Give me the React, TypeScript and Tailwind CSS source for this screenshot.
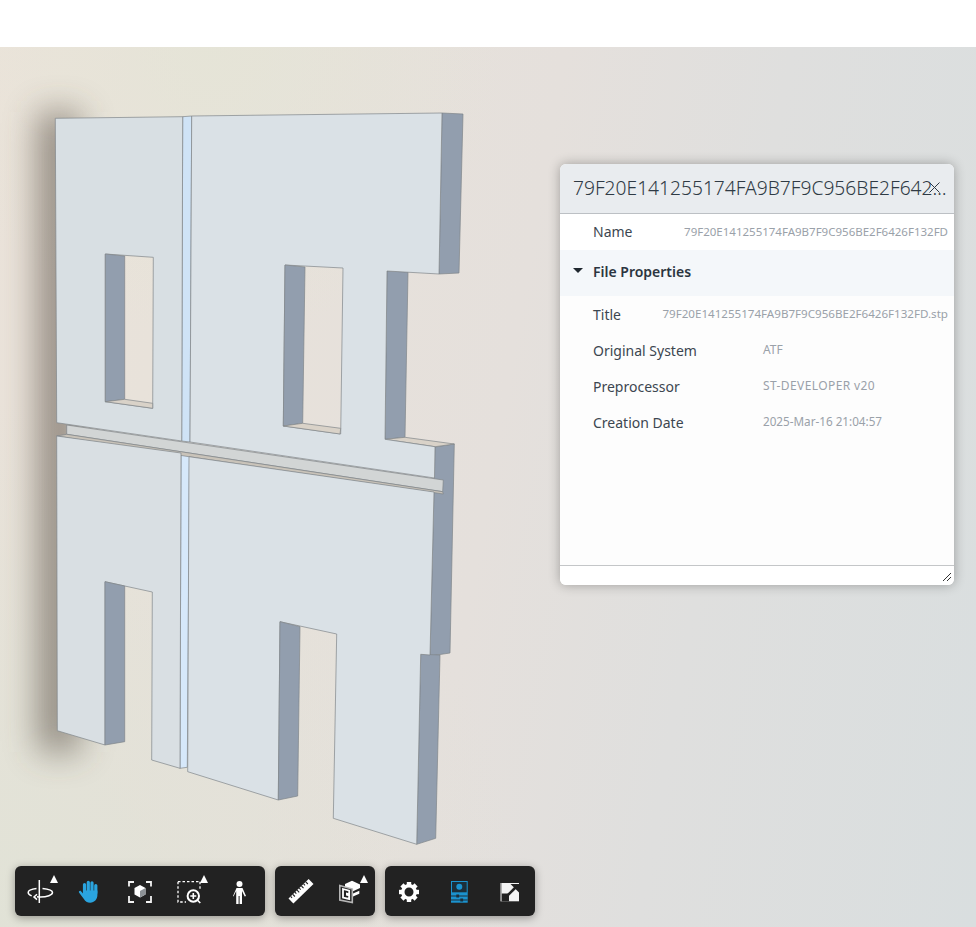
const rows = [
  { label: "Title", value: "79F20E141255174FA9B7F9C956BE2F6426F132FD.stp", size: "text-[11.6px]" },
  { label: "Original System", value: "ATF", size: "text-[12px]" },
  { label: "Preprocessor", value: "ST-DEVELOPER v20", size: "text-[12px] tracking-[0.4px]" },
  { label: "Creation Date", value: "2025-Mar-16 21:04:57", size: "text-[11.7px]" },
];

function Flyout() {
  return <span className="absolute right-[7px] top-[9px] h-0 w-0 border-x-[4px] border-b-[8px] border-x-transparent border-b-white" />;
}

function ToolButton({ children, flyout }: { children: React.ReactNode; flyout?: boolean }) {
  return (
    <div className="relative flex h-[50px] w-[50px] items-center justify-center">
      {children}
      {flyout && <Flyout />}
    </div>
  );
}

function OrbitIcon() {
  return (
    <svg width="28" height="28" viewBox="0 0 28 28" fill="none" stroke="white" strokeWidth="1.500">
      <path d="M13.300 3v23" />
      <path d="M10.500 11.500C5.500 12 2.200 13.500 2.200 15.500c0 1.300 1.300 2.500 3.500 3.400" />
      <path d="M16.500 11.500c5.500.5 10 2 10 4 0 2.500-5.500 4.500-12 4.500-1.200 0-2.500-.1-3.500-.2" />
      <path d="M11 17.200l-3 2.700 3 2.700" />
    </svg>
  );
}

function HandIcon() {
  return (
    <svg width="28" height="28" viewBox="0 0 28 28" fill="none" stroke="#2aa4df" strokeLinecap="round">
      <path d="M8.500 16V7.500M12.300 15V5.300M16 15V5.800M19.800 16V8.500" strokeWidth="3.200" />
      <path
        d="M7 13.500h14.400V18c0 4.200-3 7.700-7.200 7.700-3 0-5-1.500-6.500-4L3 15.500c-.6-1.200 1-2.300 2-1.300l2 2.300z"
        fill="#2aa4df"
        stroke="none"
      />
    </svg>
  );
}

function FitIcon() {
  return (
    <svg width="28" height="28" viewBox="0 0 28 28" fill="none">
      <path d="M8 5H3V9.500M20 5h5V9.500M3 19v6H8M25 19v6H20" stroke="#f2f2f2" strokeWidth="1.800" />
      <path d="M14 8l5.500 3v6.500L14 20.500l-5.500-3V11z" fill="white" />
      <path d="M14 14v6.500l5.500-3V11z" fill="#8d9296" />
    </svg>
  );
}

function ZoomWindowIcon() {
  return (
    <svg width="28" height="28" viewBox="0 0 28 28" fill="none" stroke="white">
      <path d="M2 4.700h21M2 4.700v20.300h8" strokeWidth="1.300" strokeDasharray="2.500 2" />
      <path d="M24 4.700v7" strokeWidth="1.300" strokeDasharray="2.500 2" />
      <circle cx="17.300" cy="19" r="5.700" strokeWidth="2" />
      <path d="M17.300 16v6M14.300 19h6M21.500 23.200l2.800 2.800" strokeWidth="1.600" />
    </svg>
  );
}

function PersonIcon() {
  return (
    <svg width="28" height="28" viewBox="0 0 28 28" fill="white">
      <circle cx="13.500" cy="7" r="3" />
      <path d="M10.500 11h6l3.500 8-1.300.6-2.700-5.500V27h-2.400v-8h-1v8h-2.400V14.100l-2.700 5.500L7 19z" />
    </svg>
  );
}

function RulerIcon() {
  return (
    <svg width="28" height="28" viewBox="0 0 28 28">
      <g transform="rotate(-44 15 14.300)">
        <rect x="1" y="10.800" width="28" height="7" fill="white" />
        <path d="M4 10.800v2M7 10.800v3M10 10.800v2M13 10.800v3M16 10.800v2M19 10.800v3M22 10.800v2M25 10.800v3" stroke="#222" strokeWidth="1.100" />
      </g>
    </svg>
  );
}

function SectionIcon() {
  return (
    <svg width="28" height="28" viewBox="0 0 28 28" fill="none">
      <path d="M9 7l7-3.300L24 7.500V11l-7 3.300L9 11z" fill="white" />
      <path d="M17 16.500l6.300-2.800v3l-6.300 2.800z" fill="white" />
      <path d="M3.800 8.500l12.500 3.500v13.500L3.800 23z" fill="#222" stroke="#b5b5b5" strokeWidth="1.600" />
      <path d="M7 12l6.200 1.700v8.300L7 20.600z" stroke="white" strokeWidth="1.800" />
      <path d="M10 15.500l3 .8v3l-3-.7z" fill="white" />
    </svg>
  );
}

function GearIcon() {
  const teeth = [0, 45, 90, 135, 180, 225, 270, 315];
  return (
    <svg width="28" height="28" viewBox="0 0 28 28">
      {teeth.map((a) => (
        <rect key={a} x="10.800" y="5" width="4.400" height="5" fill="white" transform={`rotate(${a} 13 15)`} />
      ))}
      <circle cx="13" cy="15" r="6.200" fill="none" stroke="white" strokeWidth="3.400" />
    </svg>
  );
}

function PropertiesIcon() {
  return (
    <svg width="28" height="28" viewBox="0 0 28 28">
      <rect x="5" y="4" width="16.700" height="21.700" fill="#1b93cf" />
      <rect x="6" y="5" width="14.700" height="10.300" fill="#1c2f3a" />
      <circle cx="13.300" cy="9.700" r="3" fill="#1b93cf" />
      <path d="M5 19h16.700M5 23h16.700" stroke="#1c2f3a" strokeWidth="1" />
      <rect x="10.300" y="17.500" width="2.800" height="3" fill="#1c2f3a" />
      <rect x="14.300" y="21.500" width="2.800" height="3" fill="#1c2f3a" />
    </svg>
  );
}

function ExpandIcon() {
  return (
    <svg width="28" height="28" viewBox="0 0 28 28">
      <rect x="4.700" y="6" width="18.300" height="18.300" fill="#f4f4f4" />
      <path d="M5.500 16.500h7.500v7.800H5.500z" fill="#222" />
      <path d="M9 21l11-11" stroke="#222" strokeWidth="2.600" />
      <path d="M14.500 7H23v8.500z" fill="#222" />
      <path d="M5 6v18.300" stroke="#999" strokeWidth="1.400" />
    </svg>
  );
}

// the model, in page coordinates
function Model() {
  return (
    <svg className="absolute inset-0" width="976" height="880" viewBox="0 47 976 880">
      <defs>
        <filter id="shade" x="-300%" y="-20%" width="700%" height="140%">
          <feGaussianBlur stdDeviation="17" />
        </filter>
      </defs>
      <rect x="38" y="112" width="42" height="640" fill="#4e4338" opacity="0.55" filter="url(#shade)" />

      <g stroke="#80858a" strokeWidth="0.7" strokeLinejoin="round">
        {/* side faces */}
        <polygon points="442,113 463,114 459,273 439,274" fill="#929eae" />
        <polygon points="435,447 454.300,444 450,653 430,656" fill="#929eae" />
        <polygon points="420.700,654.300 440,655 435.700,838.300 416.700,844.300" fill="#929eae" />
        <polygon points="387,271 408,272 405,437.300 385,439.300" fill="#929eae" />

        {/* tan ledges */}
        <polygon points="385,439.300 405,437.300 454.300,444 435,446.700" fill="#d9d2c8" />

        {/* blue seam */}
        <polygon points="182.700,116.700 191.700,116 190,442 181.700,441" fill="#cfe3f6" />
        <polygon points="181,453 189.500,455 187.300,767.300 180,768.300" fill="#d6e8fa" />

        {/* ledge strip */}
        <polygon points="66.700,425 443.300,480 442.700,491.700 66.700,434.300" fill="#d2d5d5" />
        <polygon points="56.700,436 66.700,434.300 442.700,491.700 443.300,494 189,456.700" fill="#c9c3b9" />

        {/* upper left panel with window */}
        <path
          fillRule="evenodd"
          d="M55.300 118.300L182.700 116.700 181.700 441 56.700 422.700ZM105.300 254L153.300 257.300 152.700 408.300 105.300 401.700Z"
          fill="#d8dfe3"
        />
        <polygon points="105.300,254 124.700,256 124.700,399.300 105.300,401.700" fill="#929eae" />
        <polygon points="105.300,401.700 124.700,399.300 152.700,403.300 152.700,408.300" fill="#d9d2c8" />

        {/* upper right panel with window */}
        <path
          fillRule="evenodd"
          d="M191.700 116L442 113 439 274 387 271 385 439.300 435 446.700 434.500 478 190 442ZM285 265L343 268 340.700 434 283.300 426Z"
          fill="#dae1e6"
        />
        <polygon points="285,265 305,267 302.700,423.300 283.300,426" fill="#929eae" />
        <polygon points="283.300,426 302.700,423.300 340.700,428.300 340,434" fill="#d9d2c8" />

        {/* lower left panel */}
        <polygon
          points="56.700,436 181,453 180,768.300 151.700,760 152.300,592 105,581.700 105,745 57.300,730.700"
          fill="#d9dfe3"
        />
        <polygon points="105,581.700 124.700,586 124.700,741.700 105,745" fill="#929eae" />

        {/* lower right panel */}
        <polygon
          points="189,456.700 434,492 430,655 420.700,654.300 416.700,844.300 333.300,818.300 336.700,634 280,621.700 278.300,800 187.700,771.700"
          fill="#dae1e6"
        />
        <polygon points="280,621.700 300,626.700 297.700,796 278.300,800" fill="#929eae" />
      </g>
    </svg>
  );
}

export default function App() {
  return (
    <div className="flex h-[927px] w-[976px] flex-col overflow-hidden bg-white font-['Noto_Sans',sans-serif]">
      <div className="h-[47px] shrink-0 bg-white" />

      <div className="relative flex-1 bg-[radial-gradient(circle_at_0%_100%,rgba(224,226,214,0.9),transparent_40%),radial-gradient(circle_at_22%_0%,rgba(228,229,214,0.7),transparent_25%),linear-gradient(100deg,#ebe3da_0%,#e8e2da_18%,#e5e0dc_50%,#dfdfde_70%,#d9dedf_100%)]">
        <Model />

        {/* Properties panel */}
        <div className="absolute left-[560px] top-[117px] flex h-[421px] w-[394px] flex-col overflow-hidden rounded-[6px] bg-[#fdfdfd] shadow-[0_0_12px_rgba(0,0,0,0.3)]">
          <div className="relative flex h-[50px] shrink-0 items-center border-b border-[#bcc0c4] bg-[#e9ecef] pl-[13px] pr-[3px]">
            <div className="truncate text-[19.2px] font-light text-[#2f3a44]">
              79F20E141255174FA9B7F9C956BE2F6426F132FD
            </div>
            <svg className="absolute right-[14px] top-[18px]" width="11" height="11" viewBox="0 0 11 11" stroke="#2f3a44" strokeWidth="1">
              <path d="M.5.5l10 10M10.500.5l-10 10" />
            </svg>
          </div>

          <div className="flex-1">
            <div className="flex h-[36px] items-center bg-white pb-[1px] pl-[33px] pr-[6px]">
              <span className="text-[14px] text-[#3c4650]">Name</span>
              <span className="ml-auto text-[11.5px] text-[#9aa1a9]">79F20E141255174FA9B7F9C956BE2F6426F132FD</span>
            </div>

            <div className="flex h-[46px] items-center bg-[#f4f7fa] pb-[3px] pl-[13px]">
              <span className="mb-[2px] h-0 w-0 border-x-[5px] border-t-[5px] border-x-transparent border-t-[#20282f]" />
              <span className="ml-[10px] text-[14px] font-semibold text-[#2b3540]">File Properties</span>
            </div>

            {rows.map((row) => (
              <div key={row.label} className="flex h-[36px] items-center pl-[33px] pr-[6px]">
                <span className="text-[14px] text-[#3c4650]">{row.label}</span>
                <span className={`ml-auto min-w-[185px] text-[#9aa1a9] ${row.size}`}>{row.value}</span>
              </div>
            ))}
          </div>

          <div className="relative h-[20px] shrink-0 border-t border-[#c4c6c8] bg-white">
            <svg className="absolute bottom-[3px] right-[2px]" width="10" height="10" viewBox="0 0 10 10" stroke="#333" strokeWidth="1">
              <path d="M1 9l8-8M5 9l4-4" />
            </svg>
          </div>
        </div>

        {/* Toolbar */}
        <div className="absolute bottom-[11px] left-[15px] flex gap-[10px]">
          <div className="flex rounded-[6px] bg-[#222222] shadow-[0_2px_8px_rgba(0,0,0,0.35)]">
            <ToolButton flyout><OrbitIcon /></ToolButton>
            <ToolButton><HandIcon /></ToolButton>
            <ToolButton><FitIcon /></ToolButton>
            <ToolButton flyout><ZoomWindowIcon /></ToolButton>
            <ToolButton><PersonIcon /></ToolButton>
          </div>
          <div className="flex rounded-[6px] bg-[#222222] shadow-[0_2px_8px_rgba(0,0,0,0.35)]">
            <ToolButton><RulerIcon /></ToolButton>
            <ToolButton flyout><SectionIcon /></ToolButton>
          </div>
          <div className="flex rounded-[6px] bg-[#222222] shadow-[0_2px_8px_rgba(0,0,0,0.35)]">
            <ToolButton><GearIcon /></ToolButton>
            <ToolButton><PropertiesIcon /></ToolButton>
            <ToolButton><ExpandIcon /></ToolButton>
          </div>
        </div>
      </div>
    </div>
  );
}
